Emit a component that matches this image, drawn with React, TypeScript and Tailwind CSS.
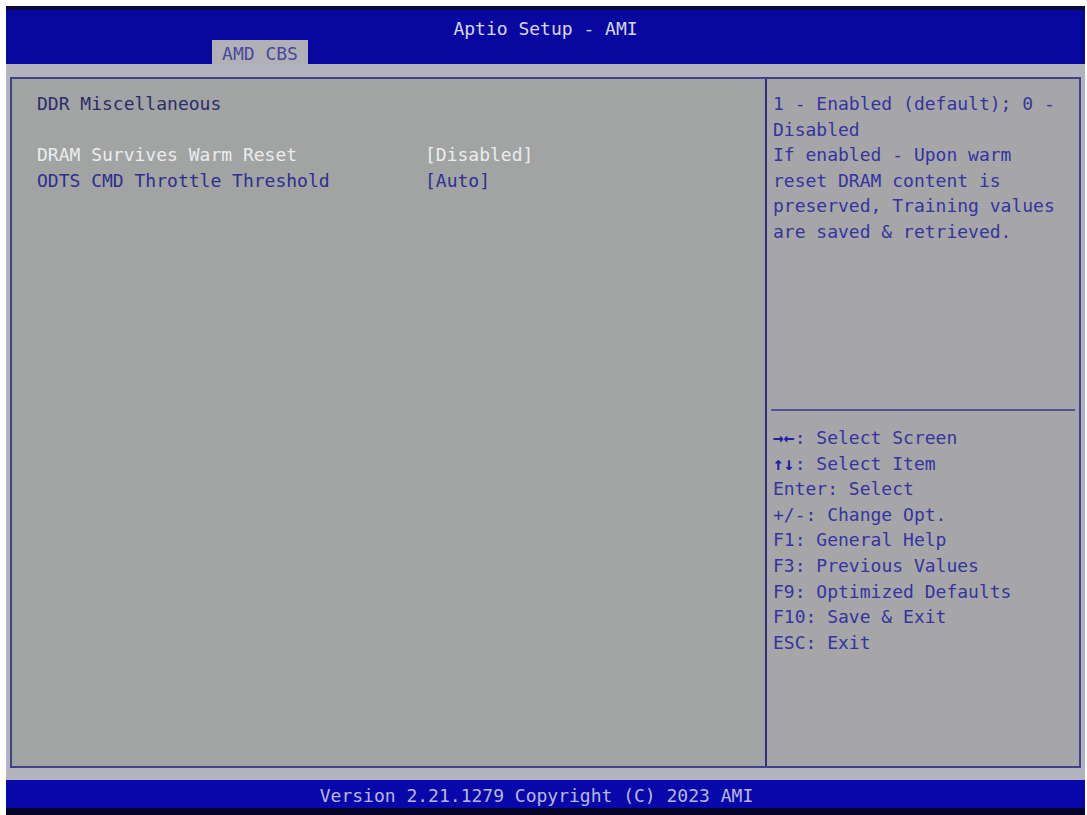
const helpLines = [
  "1 - Enabled (default); 0 -",
  "Disabled",
  "If enabled - Upon warm",
  "reset DRAM content is",
  "preserved, Training values",
  "are saved & retrieved.",
];

const keyLines: { key: string; label: string; bold?: boolean }[] = [
  { key: "→←", label: ": Select Screen", bold: true },
  { key: "↑↓", label: ": Select Item", bold: true },
  { key: "Enter", label: ": Select" },
  { key: "+/-", label: ": Change Opt." },
  { key: "F1", label: ": General Help" },
  { key: "F3", label: ": Previous Values" },
  { key: "F9", label: ": Optimized Defaults" },
  { key: "F10", label: ": Save & Exit" },
  { key: "ESC", label: ": Exit" },
];

export default function App() {
  return (
    <div
      className="h-[815px] w-[1087px] overflow-hidden bg-white pl-[6px] pt-[6px] text-[18px] leading-[25.6px]"
      style={{ fontFamily: '"DejaVu Sans Mono", "Liberation Mono", monospace' }}
    >
      <div className="flex h-[809px] w-[1079px] flex-col bg-[#b3b3bd]">
        {/* header */}
        <div className="relative h-[58px] border-t-[4px] border-[#0a0a3c] bg-[#0808a0]">
          <div className="pt-[6px] text-center text-[#d8d8f0]">Aptio Setup - AMI</div>
          <div className="absolute bottom-0 left-[206px] flex h-[24px] w-[96px] items-center justify-center bg-[#b0b0b6] pt-[3px] text-[#4848a0]">
            AMD CBS
          </div>
        </div>

        {/* main */}
        <div className="flex flex-1 px-[4px] pb-[12px] pt-[13px]">
          <div className="flex flex-1 border-y-[2px] border-l-[2px] border-[#40408c]">
            {/* left panel */}
            <div className="w-[755px] border-r-[2px] border-[#30307c] bg-[#a1a4a3] pl-[25px] pt-[12px]">
              <div className="text-[#2c2c6c]">DDR Miscellaneous</div>
              <div className="h-[25.6px]" />
              <div className="flex text-[#ececf0]">
                <div className="w-[388px]">DRAM Survives Warm Reset</div>
                <div>[Disabled]</div>
              </div>
              <div className="flex text-[#2e2e90]">
                <div className="w-[388px]">ODTS CMD Throttle Threshold</div>
                <div>[Auto]</div>
              </div>
            </div>

            {/* right panel */}
            <div className="flex flex-1 flex-col border-r-[2px] border-[#40408c] bg-[#a6a6a9]">
              <div className="h-[330px] px-[6px] pt-[12px] text-[#3434a0]">
                {helpLines.map((l, i) => (
                  <div key={i} className="whitespace-pre">
                    {l}
                  </div>
                ))}
              </div>
              <div className="mx-[4px] h-[2px] bg-[#5050a0]" />
              <div className="px-[6px] pt-[14px] text-[#3434a0]">
                {keyLines.map((k, i) => (
                  <div key={i} className="whitespace-pre">
                    <span className={k.bold ? "font-black text-[#2020a0]" : ""}>{k.key}</span>
                    {k.label}
                  </div>
                ))}
              </div>
            </div>
          </div>
        </div>

        {/* footer */}
        <div className="h-[35px] border-b-[7px] border-[#05052a] bg-[#0808aa]">
          <div className="pr-[18px] pt-[3px] text-center text-[#b8b8e0]">
            Version 2.21.1279 Copyright (C) 2023 AMI
          </div>
        </div>
      </div>
    </div>
  );
}
